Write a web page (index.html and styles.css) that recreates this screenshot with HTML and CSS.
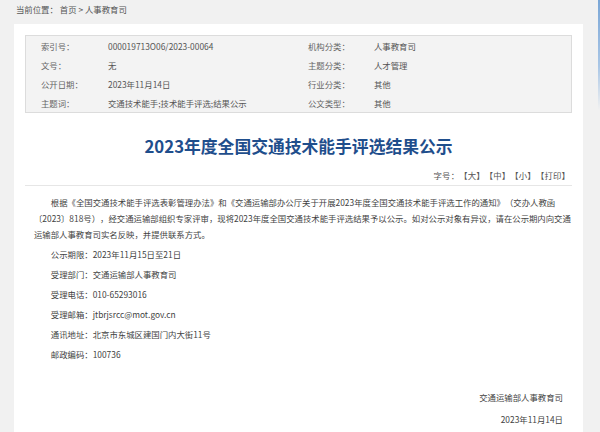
FILE: index.html
```html
<!DOCTYPE html>
<html lang="zh-CN">
<head>
<meta charset="utf-8">
<title>2023年度全国交通技术能手评选结果公示</title>
<link rel="stylesheet" href="styles.css">
</head>
<body>
<div class="edge"></div>
<div class="crumb">当前位置： <a>首页</a> &gt; <a>人事教育司</a></div>
<div class="card">
  <div class="meta">
    <div class="k">索引号：</div><div class="v">000019713O06/2023-00064</div>
    <div class="k">机构分类：</div><div class="v">人事教育司</div>
    <div class="k">文号：</div><div class="v">无</div>
    <div class="k">主题分类：</div><div class="v">人才管理</div>
    <div class="k">公开日期：</div><div class="v">2023年11月14日</div>
    <div class="k">行业分类：</div><div class="v">其他</div>
    <div class="k">主题词：</div><div class="v">交通技术能手;技术能手评选;结果公示</div>
    <div class="k">公文类型：</div><div class="v">其他</div>
  </div>
  <h1 class="title">2023年度全国交通技术能手评选结果公示</h1>
  <div class="tools">字号：【大】【中】【小】【打印】</div>
  <div class="content">
    <p class="para">根据《全国交通技术能手评选表彰管理办法》和《交通运输部办公厅关于开展2023年度全国交通技术能手评选工作的通知》（交办人教函〔2023〕818号），经交通运输部组织专家评审，现将2023年度全国交通技术能手评选结果予以公示。如对公示对象有异议，请在公示期内向交通运输部人事教育司实名反映，并提供联系方式。</p>
    <p class="line">公示期限：2023年11月15日至21日</p>
    <p class="line">受理部门：交通运输部人事教育司</p>
    <p class="line">受理电话：010-65293016</p>
    <p class="line">受理邮箱：jtbrjsrcc@mot.gov.cn</p>
    <p class="line">通讯地址：北京市东城区建国门内大街11号</p>
    <p class="line">邮政编码：100736</p>
  </div>
  <div class="sign">
    <p>交通运输部人事教育司</p>
    <p>2023年11月14日</p>
  </div>
</div>
</body>
</html>
```
FILE: styles.css
```css
html, body {
  margin: 0;
  padding: 0;
}
body {
  background: #f1f1f1;
  font-family: "Noto Sans CJK SC", "Noto Sans", sans-serif;
  font-size: 8.4px;
  color: #3f3f3f;
  text-spacing-trim: space-all;
  height: 432px;
  overflow: hidden;
  position: relative;
  display: flex;
  flex-direction: column;
}
.edge {
  position: absolute;
  top: 0;
  right: 0;
  width: 2px;
  height: 110px;
  background: linear-gradient(#7aa6d6, #a9c6e6 60%, rgba(241,241,241,0));
}
.crumb {
  height: 24px;
  line-height: 18px;
  padding-left: 16px;
  color: #555;
  flex: none;
}
.card {
  flex: 1;
  background: #fff;
  margin: 0 17px 0 14px;
  padding: 11px 11px 0;
}
.meta {
  display: grid;
  grid-template-columns: 67px 200px 66px 1fr;
  grid-auto-rows: 19px;
  align-items: center;
  padding-left: 15px;
  background: #f3f3f3;
  border: 1px solid #dcdcdc;
  color: #555;
}
.meta .k {
  color: #666;
}
.title {
  margin: 21px 0 0;
  text-align: center;
  font-size: 16.8px;
  line-height: 24px;
  font-weight: bold;
  color: #1f4e8c;
}
.tools {
  margin-top: 10px;
  line-height: 14px;
  padding: 0 2px 3px 0;
  text-align: right;
  color: #555;
  letter-spacing: 0.15px;
  border-bottom: 1px solid #e6e6e6;
}
.content {
  padding: 8px 0 0 9px;
  width: 538px;
}
.content p {
  margin: 0;
}
.para {
  line-height: 16px;
  text-indent: 2em;
}
.line {
  line-height: 16px;
  margin-top: 4px !important;
  padding-left: 16.8px;
}
.sign {
  margin-top: 27px;
  padding-right: 9px;
  text-align: right;
}
.sign p {
  margin: 0 0 6px;
  line-height: 16px;
}
```
